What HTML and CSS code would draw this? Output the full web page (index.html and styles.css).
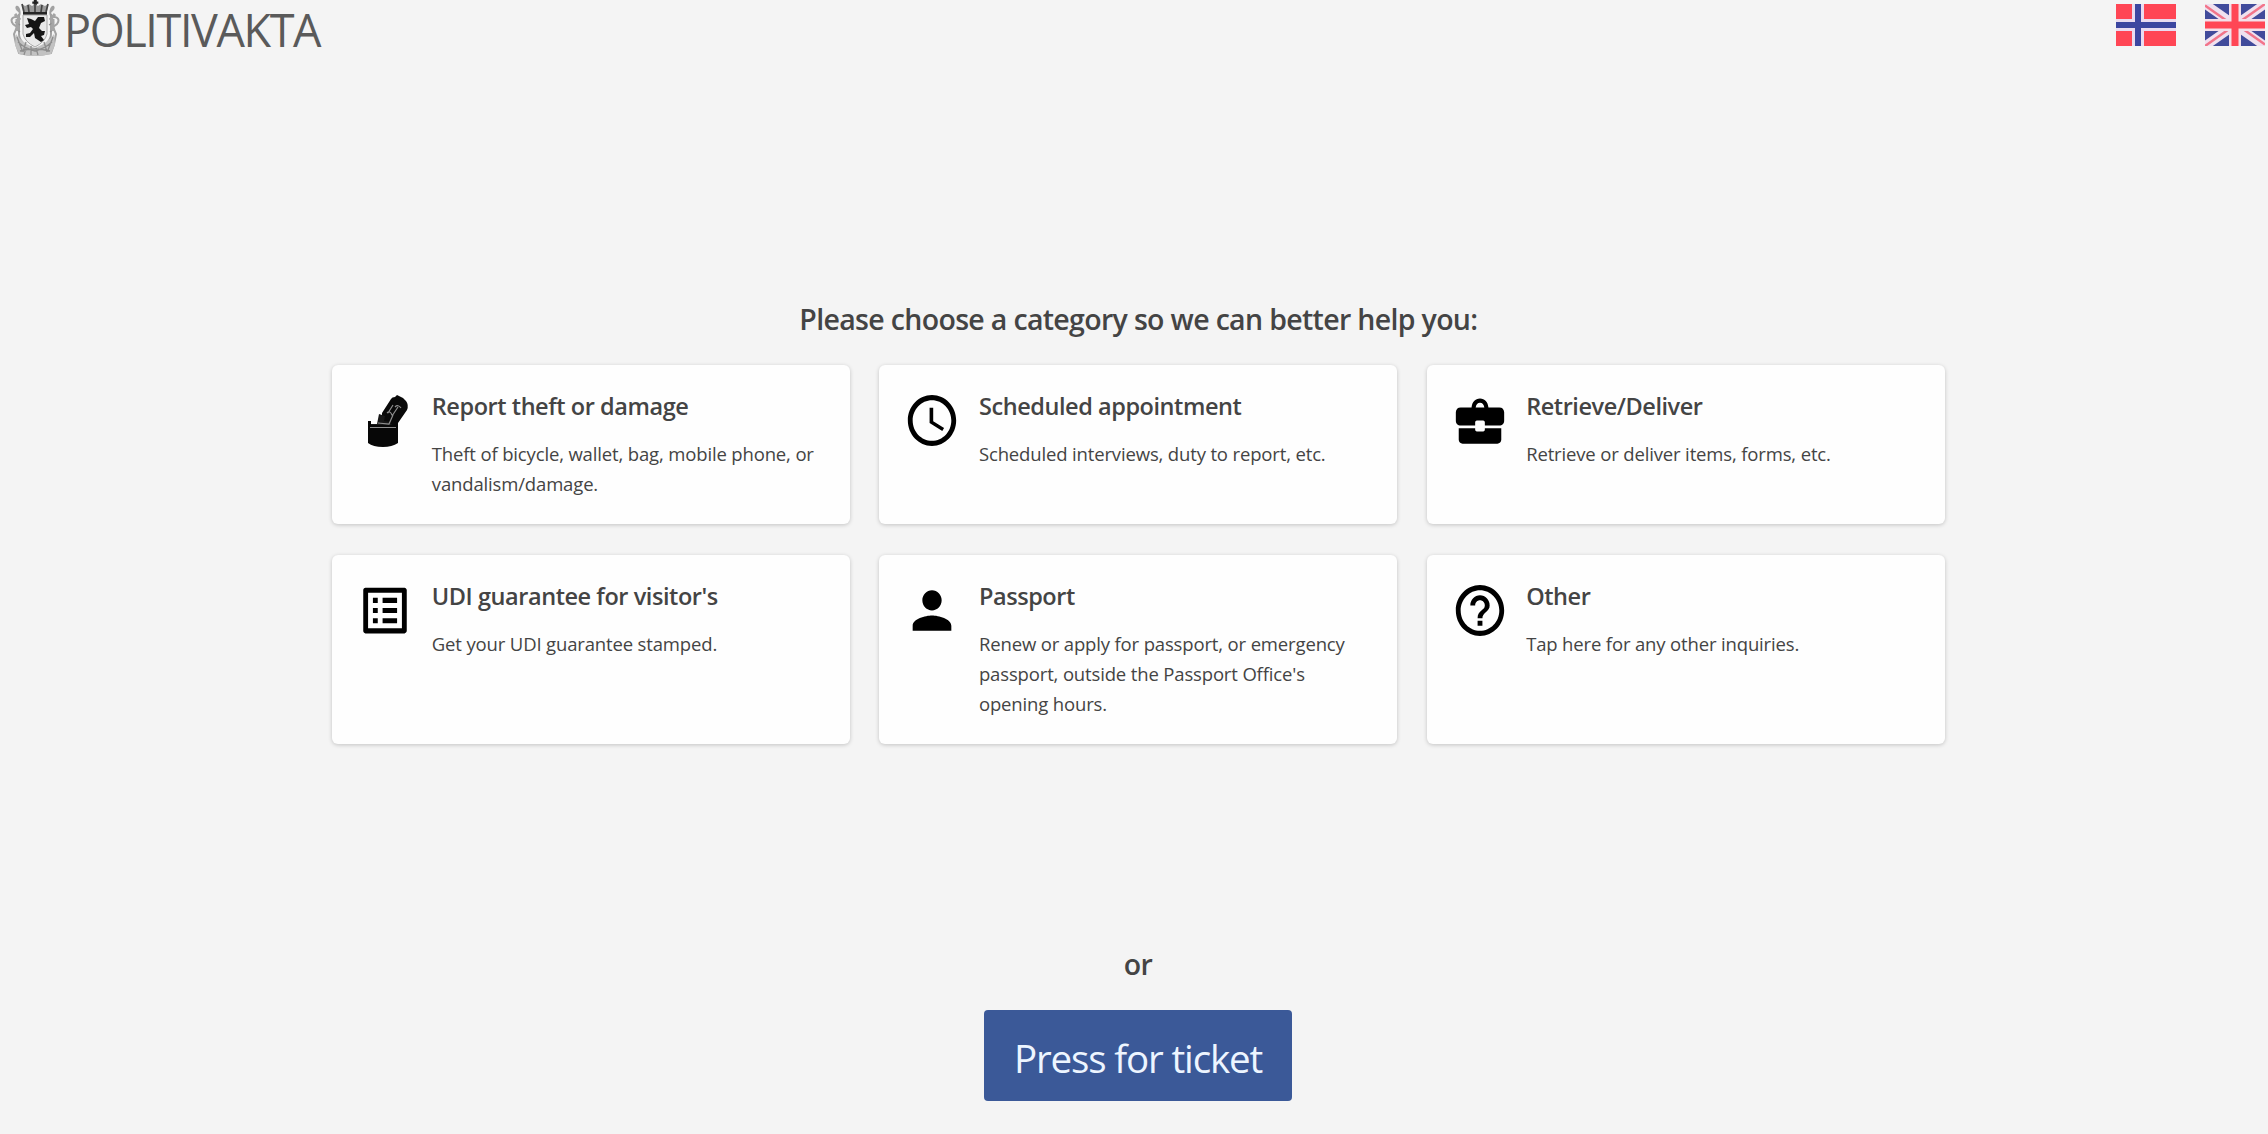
FILE: index.html
```html
<!DOCTYPE html>
<html lang="en">
<head>
<meta charset="utf-8">
<title>Politivakta</title>
<link rel="stylesheet" href="styles.css">
</head>
<body>
<header class="topbar">
  <div class="brand">
    <svg class="crest" viewBox="0 0 50 57" aria-hidden="true">
      <g fill="none" stroke="#a2a2a2" stroke-width="2">
        <path d="M10 12C4 8 7 4 9 9c2 7-1 8-3 8-4 0-6 3-3 7l4 3-3 7 2 10 3 9q16 4 32 0l3-9 2-10-3-7 4-3c3-4 1-7-3-7-2 0-5-1-3-8 2-5 5-1-1 3" />
        <path d="M9 14v20q0 10 16 16 16-6 16-16V14" />
      </g>
      <path d="M6 34q6 9 19 14 13-5 19-14l1 11-4 9q-16 4-32 0l-4-9z" fill="#c2c2c2" />
      <path d="M8 42q8 7 17 9 9-2 17-9M10 51q15-4 30 0M7 37l5 13m4-8-3 10m30-15-5 13m-4-8 3 10m-16-6v9m-5-7-2 7m12-7 2 7M5 22l5 3m34-3-5 3M6 29l4 3m34-3-4 3" fill="none" stroke="#8d8d8d" stroke-width="1.3" />
      <path d="M5 14l5 6M45 14l-5 6M7 19v12M43 19v12" fill="none" stroke="#a5a5a5" stroke-width="3" />
      <path d="M13 15h24v19q-2 8-12 13-10-5-12-13z" fill="#e9e9e9" stroke="#a8a8a8" />
      <path d="M23.800 0h3v1.500h1.500v2.200h-1.500v1.500h-3V3.700h-1.500V1.500h1.500z" fill="#222" />
      <path d="M12 4l3 2 4-2 3 2 3-2 3 2 3-2 4 2 3-2-1 8H13z" fill="#999" />
      <path d="M12 4l2 8m4-7 1 7m6-8v8m7-7-1 7m7-8-2 8" stroke="#444" stroke-width="1.700" fill="none" />
      <path d="M13 12h24v2.600H13z" fill="#252525" />
      <path d="M17 18l4 1 4 2 3-4 6 0 1 4-4 2-2 5 3 3 3 0-1 4-3 1 3 4-3 2-6-4-1-5-4 4-4 0 0-3 4-1 3-4-2-2-4 1-2-3 4-1z" fill="#151515" />
    </svg>
    <span class="brand-name">POLITIVAKTA</span>
  </div>
  <nav class="languages">
    <a class="flag" aria-label="Norsk">
      <svg viewBox="0 0 60 42" preserveAspectRatio="none">
        <path fill="#ff4655" d="M0 0h60v42H0z" />
        <path fill="#e9dcf0" d="M16 0h12v42H16zM0 15h60v12H0z" />
        <path fill="#3c46a0" d="M19 0h6v42h-6zM0 18h60v6H0z" />
      </svg>
    </a>
    <a class="flag" aria-label="English">
      <svg viewBox="0 0 60 42" preserveAspectRatio="none">
        <path fill="#414b9b" d="M0 0h60v42H0z" />
        <path stroke="#f0e1ef" stroke-width="9" d="M0 0l60 42M60 0L0 42" />
        <path stroke="#f2758a" stroke-width="2.500" d="M0 1.500l27 19M60 40.500l-27-19M60 0L33 19M0 42l27-19" />
        <path fill="#f3dfe9" d="M24 0h12v42H24zM0 15h60v12H0z" />
        <path fill="#ff4655" d="M26.500 0h7v42h-7zM0 17.500h60v7H0z" />
      </svg>
    </a>
  </nav>
</header>
<main class="content">
  <h1 class="prompt">Please choose a category so we can better help you:</h1>
  <div class="categories">
    <section class="card">
      <svg class="icon" viewBox="0 0 58 61" preserveAspectRatio="none">
        <path d="M26 23l9-14q1-2 4-2l2-2 4 2 2 1 3 3q3 4 1 9l-9 13-6 4H26z" fill="#090909" />
        <path d="M14 34l7 0 2-10 6 2-1 5 6 1 5 7v12H14z" fill="#181818" />
        <path d="M12 31h3v4h23v-4h4v22q-6 4-15 4-10 0-15-4z" fill="#070707" />
        <path d="M14 37.500h26M22 33l11 1 4-9M32 23l5-8M36 26l6-9M31 23q3-3 5 2M39 17q3-3 6 1" stroke="#909090" stroke-width="1.200" fill="none" />
      </svg>
      <div class="card-text">
        <h2 class="card-title">Report theft or damage</h2>
        <p class="card-desc">Theft of bicycle, wallet, bag, mobile phone, or vandalism/damage.</p>
      </div>
    </section>
    <section class="card">
      <svg class="icon" viewBox="0 0 24 24" preserveAspectRatio="none">
        <path d="M11.990 2C6.470 2 2 6.480 2 12s4.470 10 9.990 10C17.520 22 22 17.520 22 12S17.520 2 11.990 2zM12 20c-4.420 0-8-3.580-8-8s3.580-8 8-8 8 3.580 8 8-3.580 8-8 8zm.5-13H11v6l5.250 3.150.75-1.230-4.500-2.670z" />
      </svg>
      <div class="card-text">
        <h2 class="card-title">Scheduled appointment</h2>
        <p class="card-desc">Scheduled interviews, duty to report, etc.</p>
      </div>
    </section>
    <section class="card">
      <svg class="icon" viewBox="0 0 24 24" preserveAspectRatio="none">
        <path fill-rule="evenodd" d="M4 6.900h4.500C8.700 4.700 10 3.300 12 3.300s3.300 1.400 3.500 3.600H20c1.200 0 2 .8 2 1.900v3.300c0 1.100-.8 1.900-2 1.900h-6v-1.300q0-.7-.7-.7h-2.600q-.7 0-.7.700V14H4c-1.200 0-2-.8-2-1.900V8.800c0-1.100.8-1.900 2-1.900zm6.200 0h3.600c-.2-1.200-.8-1.900-1.800-1.900s-1.600.7-1.800 1.900z" />
        <path d="M3.200 15H10v.6q0 .7.700.7h2.600q.7 0 .7-.7V15h6.800v4.600c0 .9-.7 1.500-1.600 1.500H4.800c-.9 0-1.600-.6-1.600-1.500z" />
      </svg>
      <div class="card-text">
        <h2 class="card-title">Retrieve/Deliver</h2>
        <p class="card-desc">Retrieve or deliver items, forms, etc.</p>
      </div>
    </section>
    <section class="card">
      <svg class="icon" viewBox="0 0 24 24" preserveAspectRatio="none">
        <path d="M19 5v14H5V5h14m1.100-2H3.900c-.5 0-.9.400-.9.900v16.200c0 .4.400.9.900.9h16.200c.4 0 .9-.5.900-.9V3.900c0-.5-.5-.9-.9-.9zM11 7h6v2h-6V7zm0 4h6v2h-6v-2zm0 4h6v2h-6zM7 7h2v2H7zm0 4h2v2H7zm0 4h2v2H7z" />
      </svg>
      <div class="card-text">
        <h2 class="card-title">UDI guarantee for visitor's</h2>
        <p class="card-desc">Get your UDI guarantee stamped.</p>
      </div>
    </section>
    <section class="card">
      <svg class="icon" viewBox="0 0 24 24" preserveAspectRatio="none">
        <path d="M12 12c2.210 0 4-1.790 4-4s-1.790-4-4-4-4 1.790-4 4 1.790 4 4 4zm0 2c-2.670 0-8 1.340-8 4v2h16v-2c0-2.660-5.330-4-8-4z" />
      </svg>
      <div class="card-text">
        <h2 class="card-title">Passport</h2>
        <p class="card-desc">Renew or apply for passport, or emergency passport, outside the Passport Office's opening hours.</p>
      </div>
    </section>
    <section class="card">
      <svg class="icon" viewBox="0 0 24 24" preserveAspectRatio="none">
        <path d="M11 18h2v-2h-2v2zm1-16C6.480 2 2 6.480 2 12s4.480 10 10 10 10-4.480 10-10S17.520 2 12 2zm0 18c-4.410 0-8-3.590-8-8s3.590-8 8-8 8 3.590 8 8-3.590 8-8 8zm0-14c-2.210 0-4 1.790-4 4h2c0-1.100.9-2 2-2s2 .9 2 2c0 2-3 1.750-3 5h2c0-2.250 3-2.500 3-5 0-2.210-1.790-4-4-4z" />
      </svg>
      <div class="card-text">
        <h2 class="card-title">Other</h2>
        <p class="card-desc">Tap here for any other inquiries.</p>
      </div>
    </section>
  </div>
</main>
<footer class="ticket">
  <p class="or">or</p>
  <button class="ticket-button" type="button">Press for ticket</button>
</footer>
</body>
</html>
```
FILE: styles.css
```css
* {
  box-sizing: border-box;
}

body {
  margin: 0;
  height: 1134px;
  overflow: hidden;
  display: flex;
  flex-direction: column;
  background: #f4f4f4;
  color: #444;
  font-family: "Open Sans", "Noto Sans", sans-serif;
}

h1, h2, p {
  margin: 0;
}

.topbar {
  height: 60px;
  padding: 0 3px 0 10px;
  display: flex;
  justify-content: space-between;
  align-items: flex-start;
}

.brand {
  display: flex;
  gap: 4px;
}

.crest {
  width: 50px;
  height: 57px;
}

.brand-name {
  font-size: 45px;
  font-weight: 400;
  line-height: 59px;
  letter-spacing: -1.400px;
  color: #5a5a5a;
}

.languages {
  display: flex;
  gap: 29px;
  padding-top: 4px;
}

.flag,
.flag svg {
  display: block;
  width: 60px;
  height: 42px;
}

.content {
  padding: 240px 323.500px 0 332.300px;
}

.prompt {
  text-align: center;
  font-size: 28.500px;
  font-weight: 600;
  line-height: 38px;
  letter-spacing: -0.670px;
}

.categories {
  margin-top: 27px;
  display: grid;
  grid-template-columns: repeat(3, 1fr);
  gap: 31px 29.300px;
}

.card {
  display: flex;
  gap: 17.500px;
  padding: 25px 22px 24.500px 24px;
  background: #fefefe;
  border-radius: 6px;
  box-shadow: 0 1px 4px rgba(0, 0, 0, 0.2);
}

.icon {
  flex: none;
  width: 58px;
  height: 61px;
  fill: #000;
}

.card-title {
  font-size: 23.500px;
  font-weight: 600;
  line-height: 32px;
  letter-spacing: -0.440px;
}

.card-desc {
  margin-top: 17px;
  font-size: 18.500px;
  line-height: 30.200px;
  letter-spacing: -0.150px;
}

.ticket {
  margin-top: auto;
  padding: 0 0 33px 8px;
  display: flex;
  flex-direction: column;
  align-items: center;
}

.or {
  font-size: 28.500px;
  font-weight: 600;
  line-height: 38px;
  letter-spacing: -0.500px;
}

.ticket-button {
  width: 308px;
  height: 91px;
  margin-top: 27px;
  padding: 4px 0 0;
  border: 0;
  border-radius: 4px;
  background: #3b5998;
  color: #edf5ff;
  font-family: inherit;
  font-size: 38.500px;
  letter-spacing: -1.150px;
}
```
